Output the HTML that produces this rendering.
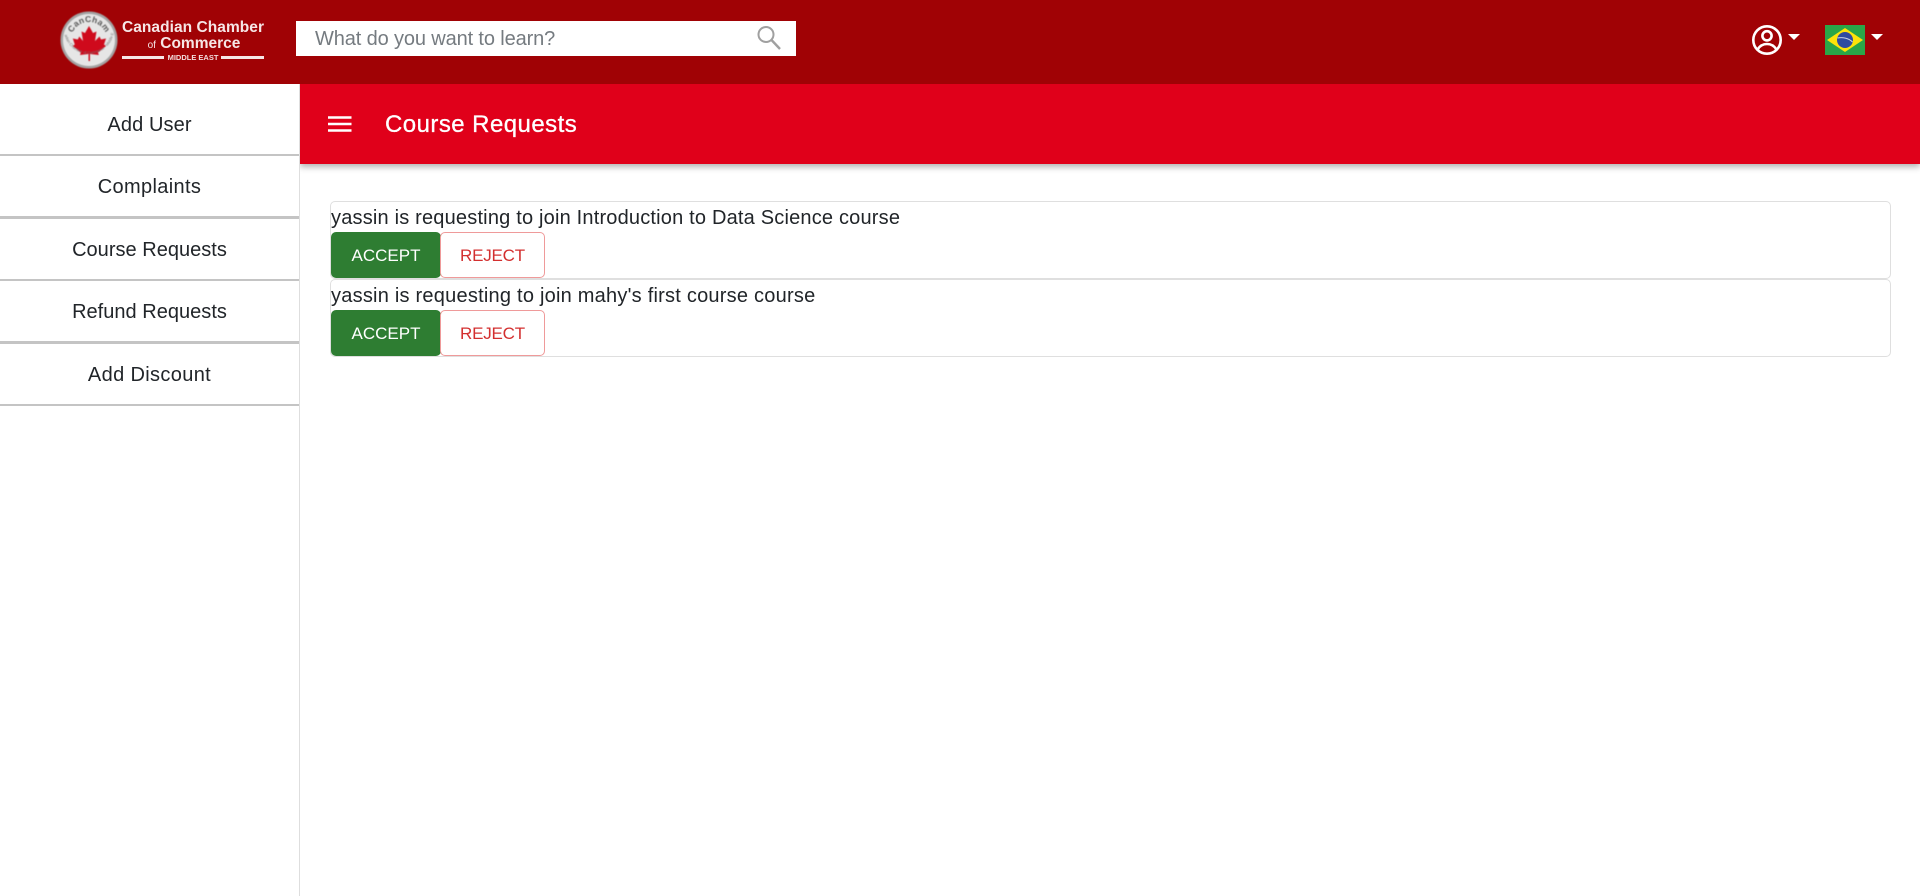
<!DOCTYPE html>
<html><head><meta charset="utf-8"><title>Course Requests</title>
<style>
*{box-sizing:border-box}
html,body{margin:0;padding:0;width:1920px;height:896px;overflow:hidden;background:#fff;font-family:"Liberation Sans",sans-serif;color:#212529}
.abs{position:absolute;white-space:nowrap}
#top{position:absolute;left:0;top:0;width:1920px;height:84px;background:#a00205}
#search{position:absolute;left:296px;top:21px;width:500px;height:35px;background:#fff}
#side{position:absolute;left:0;top:84px;width:300px;height:812px;border-right:1px solid #dedede;background:#fff}
.item{position:absolute;left:0;width:299px;text-align:center;font-size:20px;color:#212529;line-height:24px}
.ln{position:absolute;left:0;width:299px;height:2px;background:#c4c4c4}
#bar{position:absolute;left:300px;top:84px;width:1620px;height:80px;background:#e0001a;box-shadow:0 3px 6px rgba(0,0,0,.3);clip-path:inset(0 0 -20px 0)}
.card{position:absolute;left:330px;width:1561px;border:1px solid #dfdfdf;border-radius:5px;background:#fff}
.t{position:absolute;left:331px;font-size:20px;line-height:24px;color:#212529;white-space:nowrap}
.b{position:absolute;height:46px;border-radius:5px;font-size:17px;line-height:45px;text-align:center}
.acc{left:331px;width:110px;background:#2e7d32;color:#fff;border:1px solid #2e7d32}
.rej{left:440px;width:105px;background:#fff;color:#d32f2f;border:1px solid #ef9a9a;letter-spacing:-.2px}
</style></head><body>
<div id="top"></div>

<svg class="abs" style="left:58px;top:10px;filter:blur(.4px)" width="62" height="60" viewBox="0 0 62 60">
<defs>
<path id="arcTop" d="M13 30a18 18 0 0 1 36 0"/>
<path id="arcBot" d="M6.500 24a25 25 0 0 0 49 0"/>
</defs>
<circle cx="31" cy="30" r="28.500" fill="#a3a3a3"/>
<circle cx="31" cy="30" r="26" fill="#e6e6e6"/>
<path d="M31 16l4 7 3.500-1.500L37 31l4.500-4.500 1.500 3 5-1-2 6 2 1.500-8 6.500.8 2.500L32 44v7h-1.500v-7L22 45l.8-2.500-8-6.500 2-1.500-2-6 5 1 1.500-3L25 31l-1.500-9.500L27 23z" fill="#cf0a1c"/>
<text font-family="Liberation Sans,sans-serif" font-size="8.500" font-weight="700" fill="#5a5a5a" letter-spacing=".3"><textPath href="#arcTop" startOffset="50%" text-anchor="middle">CanCham</textPath></text>
<text font-family="Liberation Sans,sans-serif" font-size="3.800" fill="#777"><textPath href="#arcBot" startOffset="50%" text-anchor="middle">Canadian Chamber of Commerce - Middle East</textPath></text>
</svg>
<div class="abs" style="left:122px;top:17.500px;width:142px;font-size:15.500px;line-height:19px;font-weight:700;color:#f6e6e6;text-align:center;letter-spacing:.05px">Canadian Chamber</div>
<div class="abs" style="left:146px;top:35px;width:96px;font-size:15.500px;line-height:18px;font-weight:700;color:#f6e6e6;text-align:center"><span style="font-size:10px;font-weight:400">of</span> Commerce</div>
<div class="abs" style="left:122px;top:56px;width:42px;height:3px;background:#f6e6e6"></div>
<div class="abs" style="left:221px;top:56px;width:43px;height:3px;background:#f6e6e6"></div>
<div class="abs" style="left:165px;top:53px;width:56px;font-size:7.500px;line-height:10px;font-weight:700;color:#f3dcdc;text-align:center">MIDDLE EAST</div>

<div id="search"></div>
<div class="abs" style="left:315px;top:27px;font-size:20px;line-height:24px;color:#757b80;letter-spacing:-.13px">What do you want to learn?</div>
<svg class="abs" style="left:755px;top:24px" width="28" height="28" viewBox="0 0 28 28">
<circle cx="11" cy="10.500" r="7.500" fill="none" stroke="#a0a0a0" stroke-width="2"/>
<path d="M16.500 16l8.500 9" stroke="#a0a0a0" stroke-width="2.400" fill="none"/>
</svg>

<svg class="abs" style="left:1750px;top:23px" width="34" height="34" viewBox="0 0 34 34">
<circle cx="17" cy="17" r="13.700" fill="none" stroke="#fff" stroke-width="2.600"/>
<circle cx="17" cy="12.800" r="4.600" fill="none" stroke="#fff" stroke-width="2.600"/>
<path d="M7.500 26.500C10 22.500 13 21 17 21s7 1.500 9.500 5.500" fill="none" stroke="#fff" stroke-width="2.600"/>
</svg>
<div class="abs" style="left:1788px;top:34px;width:0;height:0;border-left:6px solid transparent;border-right:6px solid transparent;border-top:6px solid #fff"></div>

<svg class="abs" style="left:1825px;top:25px" width="40" height="30" viewBox="0 0 40 30">
<rect width="40" height="30" fill="#2aa648"/>
<path d="M20 3L38 15 20 27 2 15z" fill="#fde30a"/>
<circle cx="20" cy="15" r="8" fill="#2f4ba0"/>
<path d="M12.500 13c5-1 11 0 15 4" stroke="#c9d2e2" stroke-width="1.100" fill="none"/>
</svg>
<div class="abs" style="left:1871px;top:34px;width:0;height:0;border-left:6px solid transparent;border-right:6px solid transparent;border-top:6px solid #fff"></div>

<div id="side"></div>
<div class="item" style="top:113px;letter-spacing:.1px">Add User</div>
<div class="ln" style="top:154px"></div>
<div class="item" style="top:175px;letter-spacing:.35px">Complaints</div>
<div class="ln" style="top:216px;height:3px"></div>
<div class="item" style="top:237.500px;letter-spacing:.02px">Course Requests</div>
<div class="ln" style="top:279px"></div>
<div class="item" style="top:300px;letter-spacing:.02px">Refund Requests</div>
<div class="ln" style="top:341px;height:3px"></div>
<div class="item" style="top:362.500px;letter-spacing:.35px">Add Discount</div>
<div class="ln" style="top:404px"></div>

<div id="bar"></div>
<svg class="abs" style="left:328px;top:116px" width="24" height="16" viewBox="0 0 24 16">
<path d="M0 1.500h23.500M0 8h23.500M0 14.500h23.500" stroke="#fff" stroke-width="2.600"/>
</svg>
<div class="abs" style="left:385px;top:110px;font-size:24px;line-height:30px;color:#fff;letter-spacing:.45px;-webkit-text-stroke:.3px #fff">Course Requests</div>

<div class="card" style="top:201px;height:78px"></div>
<div class="t" style="top:206px;letter-spacing:.19px">yassin is requesting to join Introduction to Data Science course</div>
<div class="b acc" style="top:232px">ACCEPT</div>
<div class="b rej" style="top:232px">REJECT</div>

<div class="card" style="top:279px;height:78px"></div>
<div class="t" style="top:284px;letter-spacing:.23px">yassin is requesting to join mahy's first course course</div>
<div class="b acc" style="top:310px">ACCEPT</div>
<div class="b rej" style="top:310px">REJECT</div>
</body></html>
